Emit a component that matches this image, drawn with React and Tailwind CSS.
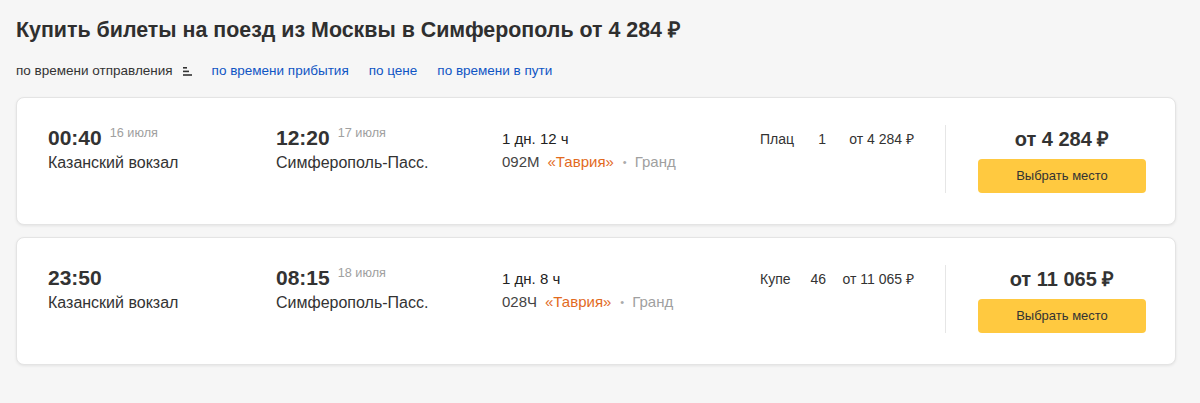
import React from 'react';

const trains = [
  {
    depTime: '00:40',
    depDate: '16 июля',
    depStation: 'Казанский вокзал',
    arrTime: '12:20',
    arrDate: '17 июля',
    arrStation: 'Симферополь-Пасс.',
    duration: '1 дн. 12 ч',
    number: '092М',
    name: '«Таврия»',
    carrier: 'Гранд',
    seatType: 'Плац',
    seats: '1',
    seatPrice: 'от 4 284 ₽',
    price: 'от 4 284 ₽'
  },
  {
    depTime: '23:50',
    depDate: '',
    depStation: 'Казанский вокзал',
    arrTime: '08:15',
    arrDate: '18 июля',
    arrStation: 'Симферополь-Пасс.',
    duration: '1 дн. 8 ч',
    number: '028Ч',
    name: '«Таврия»',
    carrier: 'Гранд',
    seatType: 'Купе',
    seats: '46',
    seatPrice: 'от 11 065 ₽',
    price: 'от 11 065 ₽'
  }
];

const sorts = ['по времени прибытия', 'по цене', 'по времени в пути'];

const TimeBlock = ({ time, date, station }) => (
  <div className="mt-[1px]">
    <div className="flex items-start">
      <span className="text-[21px] leading-[24px] font-bold text-[#333]">{time}</span>
      {date && <span className="ml-[8px] text-[12.7px] leading-[14px] text-[#a0a0a0]">{date}</span>}
    </div>
    <div className="mt-[3px] text-[16px] leading-[20px] text-[#333]">{station}</div>
  </div>
);

const TrainCard = ({ t }) => (
  <div className="flex h-[128px] w-[1160px] items-start rounded-[8px] border border-[#e4e4e4] bg-white pl-[31px] pt-[27px] shadow-[0_1px_3px_rgba(0,0,0,0.08)]">
    <div className="w-[228px]">
      <TimeBlock time={t.depTime} date={t.depDate} station={t.depStation} />
    </div>
    <div className="w-[226px]">
      <TimeBlock time={t.arrTime} date={t.arrDate} station={t.arrStation} />
    </div>
    <div className="mt-[4px] w-[258px]">
      <div className="text-[15px] leading-[20px] font-medium text-[#222]">{t.duration}</div>
      <div className="mt-[3px] flex items-center text-[15px] leading-[20px]">
        <span className="text-[#444]">{t.number}</span>
        <span className="ml-[8px] text-[#e26a1e]">{t.name}</span>
        <span className="ml-[9px] text-[11px] text-[#aaa]">•</span>
        <span className="ml-[8px] text-[#a0a0a0]">{t.carrier}</span>
      </div>
    </div>
    <div className="mt-[4px] grid w-[185px] grid-cols-[50px_16px_88px] text-[14px] leading-[20px] text-[#333]">
      <span>{t.seatType}</span>
      <span className="text-right">{t.seats}</span>
      <span className="text-right">{t.seatPrice}</span>
    </div>
    <div className="flex h-[68px] flex-1 flex-col items-center border-l border-[#e6e6e6] pt-[2px] pl-[3px]">
      <div className="text-[20px] leading-[24px] font-bold text-[#333]">{t.price}</div>
      <button className="mt-[8px] h-[34px] w-[168px] rounded-[4px] bg-[#ffc940] text-[13px] text-[#333]">
        Выбрать место
      </button>
    </div>
  </div>
);

const App = () => {
  return (
    <div
      className="min-h-[403px] w-[1200px] bg-[#f6f6f6] px-[16px] pt-[16px]"
      style={{ fontFamily: '"Liberation Sans", Arial, sans-serif' }}
    >
      <h1 className="text-[21.4px] leading-[28px] font-bold text-[#2f2f2f]">
        Купить билеты на поезд из Москвы в Симферополь от 4 284 ₽
      </h1>
      <div className="mt-[19px] flex items-center text-[13.5px] leading-[16px]">
        <span className="text-[#333]">по времени отправления</span>
        <svg width="9" height="9" viewBox="0 0 9 9" className="ml-[10px]">
          <rect x="0" y="0" width="4" height="1.6" fill="#333" />
          <rect x="0" y="3.6" width="6" height="1.6" fill="#333" />
          <rect x="0" y="7.2" width="9" height="1.6" fill="#333" />
        </svg>
        {sorts.map((s) => (
          <span key={s} className="ml-[20px] text-[#0f55c4]">
            {s}
          </span>
        ))}
      </div>
      <div className="mt-[18px] flex flex-col gap-[12px]">
        {trains.map((t) => (
          <TrainCard key={t.number} t={t} />
        ))}
      </div>
    </div>
  );
};

export default App;
